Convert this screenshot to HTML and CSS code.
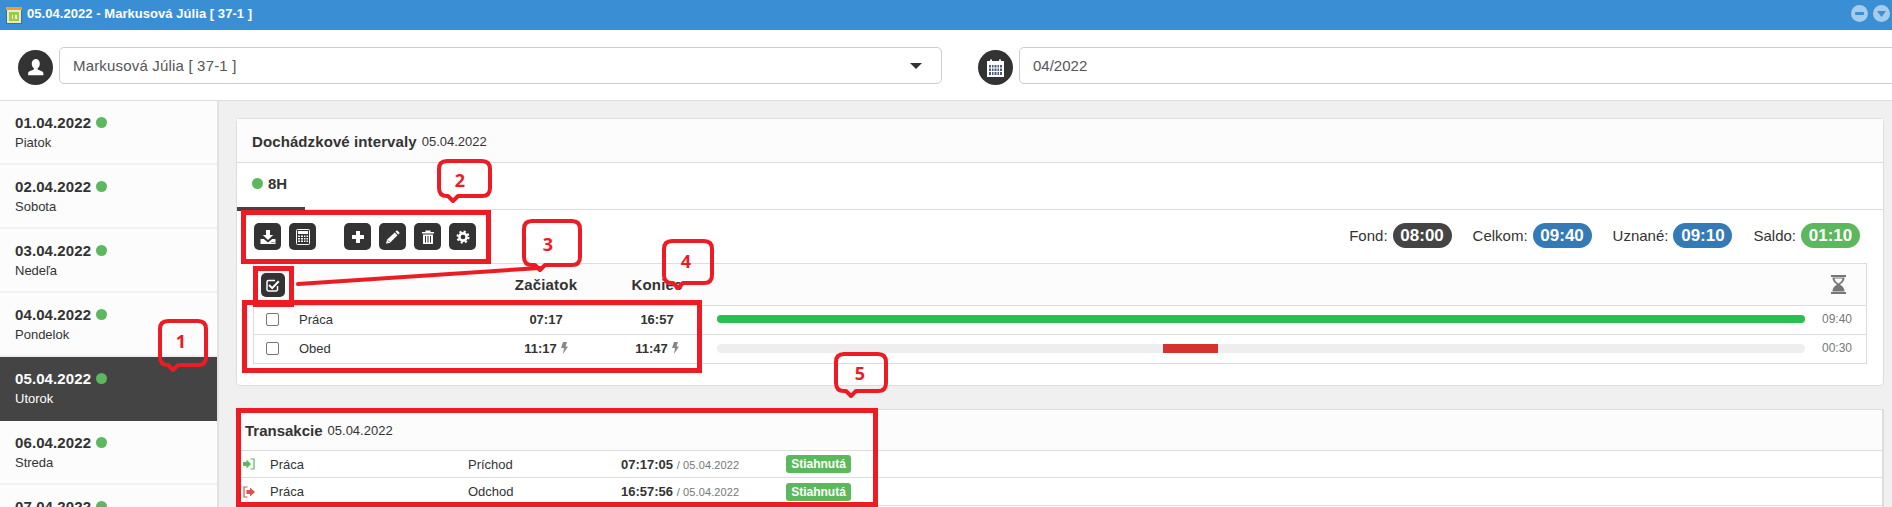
FILE: index.html
```html
<!DOCTYPE html>
<html lang="sk">
<head>
<meta charset="utf-8">
<title>Dochádzka</title>
<link rel="stylesheet" href="styles.css">
</head>
<body>
<div class="app">
  <header class="titlebar">
    <svg class="title-icon" viewBox="0 0 16 17"><rect x="0" y="0" width="16" height="17" fill="#3f6f94"/><rect x="0" y="0" width="16" height="3" fill="#f09a3a"/><rect x="1" y="3" width="14" height="13" fill="#e8ecc4"/><rect x="3" y="5" width="10" height="9" fill="#9ccb4a"/><rect x="6" y="8" width="1" height="4" fill="#f4f4d0"/><rect x="9" y="8" width="2" height="4" fill="#f4f4d0"/></svg>
    <span class="title-text">05.04.2022 - Markusová Júlia [ 37-1 ]</span>
    <span class="win-btns">
      <span class="win-btn"><svg viewBox="0 0 17 17"><rect x="4" y="7" width="9" height="3" rx="1" fill="#3b8fd4"/></svg></span>
      <span class="win-btn"><svg viewBox="0 0 17 17"><path d="M4 6h9l-4.500 6z" fill="#3b8fd4"/></svg></span>
    </span>
  </header>

  <section class="filters">
    <span class="round-icon"><svg viewBox="-2 -1 39 39"><path d="M17.500 9c3 0 4.800 2.300 4.800 5.200 0 2.200-1 4.200-2.400 5.100v1.300l4.800 2c1.100.5 1.600 1.300 1.600 2.400V27H9.300v-1.900c0-1.100.5-1.900 1.600-2.400l4.800-2v-1.300c-1.400-.9-2.400-2.900-2.400-5.100 0-2.900 1.700-5.300 4.200-5.300z" fill="#fff"/></svg></span>
    <div class="select"><span>Markusová Júlia [ 37-1 ]</span><i class="caret"></i></div>
    <span class="round-icon round-cal"><svg viewBox="0 0 35 35"><path d="M9 11h3V9.500h2V11h7V9.500h2V11h3v16H9z" fill="#fff"/><path d="M11 15h13v10H11z" fill="#4a5a78"/><path d="M13.500 15v10M16 15v10M19 15v10M21.500 15v10M11 18h13M11 21.500h13" stroke="#fff" stroke-width="1"/></svg></span>
    <div class="month-input">04/2022</div>
  </section>

  <div class="workspace">
    <aside class="days">
      <a class="day"><span class="day-date">01.04.2022<i class="dot"></i></span><span class="day-name">Piatok</span></a>
      <a class="day"><span class="day-date">02.04.2022<i class="dot"></i></span><span class="day-name">Sobota</span></a>
      <a class="day"><span class="day-date">03.04.2022<i class="dot"></i></span><span class="day-name">Nedeľa</span></a>
      <a class="day"><span class="day-date">04.04.2022<i class="dot"></i></span><span class="day-name">Pondelok</span></a>
      <a class="day day-active"><span class="day-date">05.04.2022<i class="dot"></i></span><span class="day-name">Utorok</span></a>
      <a class="day"><span class="day-date">06.04.2022<i class="dot"></i></span><span class="day-name">Streda</span></a>
      <a class="day"><span class="day-date">07.04.2022<i class="dot"></i></span></a>
    </aside>

    <main class="content">
      <section class="panel">
        <h2 class="panel-head"><b>Dochádzkové intervaly</b> <small>05.04.2022</small></h2>
        <div class="tabs"><div class="tab"><i class="dot tab-dot"></i>8H</div></div>

        <div class="toolbar">
          <div class="btn-group">
            <button class="btn"><svg viewBox="0 0 16 16"><path d="M6 1h4v5h3.200L8 11 2.800 6H6zM.5 10h3.300L8 13.500 12.200 10h3.300v5H.5z" fill="#fff"/><path d="M11.500 13h1v1h-1zM13.500 13h1v1h-1z" fill="#333"/></svg></button>
            <button class="btn"><svg viewBox="0 0 16 16"><rect x="1.500" y=".5" width="13" height="15" rx="1" fill="#333" stroke="#fff"/><rect x="3" y="2" width="10" height="3" fill="#fff"/><path d="M3 6.500h2v1.500H3zM6 6.500h2v1.500H6zM9 6.500h1.500v1.500H9zM11.500 6.500H13v1.500h-1.500zM3 9h2v1.500H3zM6 9h2v1.500H6zM9 9h1.500v1.500H9zM11.500 9H13v1.500h-1.500zM3 11.500h2V13H3zM6 11.500h2V13H6zM9 11.500h1.500V13H9zM11.500 11.500H13V13h-1.500z" fill="#fff"/></svg></button>
          </div>
          <div class="btn-group">
            <button class="btn"><svg viewBox="0 0 16 16"><path d="M6 2h4v4h4v4h-4v4H6v-4H2V6h4z" fill="#fff"/></svg></button>
            <button class="btn"><svg viewBox="0 0 16 16"><path d="M12 1.200l2.800 2.800-1.500 1.500-2.800-2.800zM9.700 3.500l2.800 2.800-7.500 7.500-4 1 1-4z" fill="#fff"/><path d="M3 11.500l1.500 1.500" stroke="#333" stroke-width=".8"/></svg></button>
            <button class="btn"><svg viewBox="0 0 16 16"><path d="M5.500 3V1.500h5V3H14v1.500H2V3z" fill="#fff"/><path d="M3 5.500h10V15H3z" fill="#fff"/><path d="M5.500 7v6.500M8 7v6.500M10.500 7v6.500" stroke="#333" stroke-width="1"/></svg></button>
            <button class="btn"><svg viewBox="-1.500 -1.500 19 19"><circle cx="8" cy="8" r="4.300" fill="none" stroke="#fff" stroke-width="3"/><circle cx="8" cy="8" r="6.500" fill="none" stroke="#fff" stroke-width="2.500" stroke-dasharray="2.550 2.550"/></svg></button>
          </div>
          <div class="stats">
            <span class="stat">Fond:<b class="pill pill-dark">08:00</b></span>
            <span class="stat">Celkom:<b class="pill pill-blue">09:40</b></span>
            <span class="stat">Uznané:<b class="pill pill-blue">09:10</b></span>
            <span class="stat">Saldo:<b class="pill pill-green">01:10</b></span>
          </div>
        </div>

        <div class="table">
          <div class="row row-head">
            <span class="cell-check"><button class="btn btn-sm"><svg viewBox="0 0 16 16"><path d="M12.500 9v3.500a1.500 1.500 0 0 1-1.500 1.500H3.500A1.500 1.500 0 0 1 2 12.500V5a1.500 1.500 0 0 1 1.500-1.500H10" fill="none" stroke="#fff" stroke-width="1.500"/><path d="M4.800 7.300l2.400 2.400L13 3.500l1.500 1.500-7.300 7.500L3.300 8.800z" fill="#fff"/></svg></button></span>
            <span></span>
            <span class="cell-center">Začiatok</span>
            <span class="cell-center">Koniec</span>
            <span></span>
            <span class="cell-hour"><svg class="hourglass" viewBox="0 0 17 19"><path d="M1 0h15v2H1zM1 17h15v2H1zM2.500 2.500h12c0 4-2.500 5.500-4.500 7 2 1.500 4.500 3 4.500 7h-12c0-4 2.500-5.500 4.500-7-2-1.500-4.500-3-4.500-7zM4.500 3.500c.3 2.300 2 3.800 4 5 2-1.200 3.700-2.700 4-5z" fill="#777" fill-rule="evenodd"/></svg></span>
          </div>
          <div class="row row-data">
            <span class="cell-check"><i class="checkbox"></i></span>
            <span>Práca</span>
            <span class="cell-center cell-time">07:17</span>
            <span class="cell-center cell-time">16:57</span>
            <span class="cell-bar"><span class="bar bar-thin"><span class="bar-fill bar-green" style="left:0;width:100%"></span></span></span>
            <span class="cell-dur">09:40</span>
          </div>
          <div class="row row-data">
            <span class="cell-check"><i class="checkbox"></i></span>
            <span>Obed</span>
            <span class="cell-center cell-time">11:17<svg class="bolt" viewBox="0 0 7 12"><path d="M2 0h4L4.500 4.500H7L2 12l1-6H0z" fill="#888"/></svg></span>
            <span class="cell-center cell-time">11:47<svg class="bolt" viewBox="0 0 7 12"><path d="M2 0h4L4.500 4.500H7L2 12l1-6H0z" fill="#888"/></svg></span>
            <span class="cell-bar"><span class="bar"><span class="bar-fill bar-red" style="left:41%;width:5.05%"></span></span></span>
            <span class="cell-dur">00:30</span>
          </div>
        </div>
      </section>

      <section class="panel panel-trans">
        <h2 class="panel-head trans-head"><b>Transakcie</b> <small>05.04.2022</small></h2>
        <div class="trans-row">
          <svg class="trans-icon" viewBox="0 0 12 12"><path d="M0 4h3.500V1.500L8 6l-4.500 4.500V8H0z" fill="#5cb85c"/><path d="M7.500 1H11v10H7.500" fill="none" stroke="#5cb85c" stroke-width="1.200"/></svg>
          <span>Práca</span><span>Príchod</span>
          <span class="trans-time"><b>07:17:05</b> <small>/ 05.04.2022</small></span>
          <span class="tag">Stiahnutá</span>
        </div>
        <div class="trans-row">
          <svg class="trans-icon" viewBox="0 0 12 12"><path d="M4.500 1H1v10h3.500" fill="none" stroke="#d9534f" stroke-width="1.200"/><path d="M3.500 4H7V1.500L12 6l-5 4.500V8H3.500z" fill="#d9534f"/></svg>
          <span>Práca</span><span>Odchod</span>
          <span class="trans-time"><b>16:57:56</b> <small>/ 05.04.2022</small></span>
          <span class="tag">Stiahnutá</span>
        </div>
      </section>
    </main>
  </div>

  <svg class="annotations" viewBox="0 0 1892 507">
    <rect class="a-box" x="243.500" y="212.500" width="245" height="49"/>
    <rect class="a-box" x="255.500" y="268.500" width="36" height="36"/>
    <rect class="a-box" x="244.500" y="302.500" width="455" height="68"/>
    <rect class="a-box" x="238.500" y="410.500" width="637" height="94"/>
    <path class="a-line" d="M298 284L540 268"/>
    <path class="a-call" d="M168 321H198Q206 321 206 329V357Q206 365 198 365H178L173 370L168 365Q160 365 160 357V329Q160 321 168 321Z"/>
    <path class="a-call" d="M447 161H482Q490 161 490 169V188Q490 196 482 196H458L453 201L448 196H447Q439 196 439 188V169Q439 161 447 161Z"/>
    <path class="a-call" d="M532 221H572Q580 221 580 229V257Q580 265 572 265H545L540 270L535 265H532Q524 265 524 257V229Q524 221 532 221Z"/>
    <path class="a-call" d="M672 241H704Q712 241 712 249V275Q712 283 704 283H683L678 288L673 283H672Q664 283 664 275V249Q664 241 672 241Z"/>
    <path class="a-call" d="M844 354H878Q886 354 886 362V383Q886 391 878 391H856L851 396L846 391H844Q836 391 836 383V362Q836 354 844 354Z"/>
    <text class="a-num" x="181" y="348">1</text>
    <text class="a-num" x="460" y="187">2</text>
    <text class="a-num" x="548" y="251">3</text>
    <text class="a-num" x="686" y="268">4</text>
    <text class="a-num" x="860" y="380">5</text>
  </svg>
</div>
</body>
</html>
```
FILE: styles.css
```css
* { box-sizing: border-box; }
html, body { margin: 0; height: 100%; overflow: hidden; }
body { font-family: "Liberation Sans", Arial, sans-serif; font-size: 13px; color: #333; background: #fff; }

.app { position: relative; display: flex; flex-direction: column; height: 507px; overflow: hidden; }

/* title bar */
.titlebar { flex: none; display: flex; align-items: center; height: 30px; padding: 0 2px 3px 6px; background: #3a8fd4; color: #fff; }
.title-icon { width: 16px; height: 17px; margin-top: 3px; flex: none; }
.title-text { margin-left: 5px; font-size: 13px; font-weight: 700; letter-spacing: .05px; }
.win-btns { display: flex; gap: 5px; margin-left: auto; }
.win-btn { width: 17px; height: 17px; border-radius: 50%; background: #a6cced; }
.win-btn svg { display: block; width: 17px; height: 17px; }

/* filter row */
.filters { flex: none; display: flex; align-items: flex-start; height: 71px; padding: 17px 0 0 18px; border-bottom: 1px solid #ddd; overflow: hidden; }
.round-icon { flex: none; width: 35px; height: 35px; margin-top: 3px; border-radius: 50%; background: #333; }
.round-icon svg { display: block; width: 35px; height: 35px; }
.round-cal { margin-left: 36px; }
.select, .month-input { display: flex; align-items: center; height: 37px; border: 1px solid #ccc; border-radius: 5px; background: #fff; font-size: 15px; color: #555; }
.select { width: 883px; margin-left: 6px; padding: 0 19px 0 13px; justify-content: space-between; letter-spacing: .18px; }
.caret { width: 0; height: 0; border-style: solid; border-width: 6px 6px 0; border-color: #333 transparent transparent; }
.month-input { flex: 1; margin: 0 -6px 0 6px; padding-left: 13px; }

/* main layout */
.workspace { flex: 1; display: flex; min-height: 0; }
.days { flex: none; width: 219px; background: #fcfcfc; border-right: 2px solid #e2e2e2; overflow: hidden; }
.day { display: flex; flex-direction: column; height: 64px; padding: 13px 0 0 15px; border-bottom: 2px solid #f0f0f0; }
.day-date { display: flex; align-items: center; font-size: 15px; font-weight: 700; line-height: 17px; letter-spacing: .1px; }
.day-name { margin-top: 3px; font-size: 13px; line-height: 17px; }
.dot { display: inline-block; flex: none; width: 11px; height: 11px; margin-left: 5px; border-radius: 50%; background: #5cb85c; }
.day-active { background: #444; color: #fff; border-bottom-color: #444; }

.content { flex: 1; min-width: 0; padding: 17px 8px 0 17px; background: #f0f0f0; }
.panel { border: 1px solid #ddd; border-radius: 4px; background: #fff; height: 268px; }
.panel-trans { height: 120px; margin-top: 23px; border-radius: 0; border-right-width: 2px; }
.panel-head { display: flex; align-items: center; gap: 5px; height: 44px; margin: 0; padding: 2px 0 0 15px; border-bottom: 1px solid #ddd; background: #fcfcfc; font-size: 15px; font-weight: 400; }
.panel-head b { letter-spacing: .1px; }
.panel-head small { font-size: 13px; }
.trans-head { height: 41px; padding: 0 0 0 8px; }
.trans-head b { letter-spacing: 0; }

.tabs { height: 47px; border-bottom: 1px solid #ddd; }
.tab { display: flex; align-items: center; width: 68px; height: 48px; padding: 0 0 3px 10px; border-bottom: 4px solid #444; font-size: 15px; font-weight: 700; }
.tab-dot { margin: 0 5px 0 5px; }

.toolbar { display: flex; align-items: center; height: 53px; padding: 0 23px 0 17px; }
.btn-group { display: flex; gap: 8px; }
.btn-group + .btn-group { margin-left: 28px; }
.btn { display: flex; align-items: center; justify-content: center; width: 27px; height: 27px; padding: 0; border: 0; border-radius: 5px; background: #333; }
.btn svg { display: block; width: 16px; height: 16px; }
.btn-sm { width: 24px; height: 24px; }
.stats { display: flex; gap: 21px; margin: 0 0 2px auto; }
.stat { display: flex; align-items: center; gap: 5px; font-size: 15px; }
.pill { width: 59px; height: 25px; border-radius: 13px; color: #fff; font-size: 17px; line-height: 25px; text-align: center; }
.pill-dark { background: #444; }
.pill-blue { background: #337ab7; }
.pill-green { background: #5cb85c; }

.table { margin: 0 16px; border: 1px solid #ddd; }
.row { display: grid; grid-template-columns: 46px 190px 112px 110px 1fr 61px; align-items: center; height: 29px; border-top: 1px solid #ddd; }
.row-head { height: 41px; border-top: 0; background: #fcfcfc; font-size: 15px; font-weight: 700; letter-spacing: .2px; }
.row-data { padding-bottom: 2px; }
.row-data > span:nth-child(2) { margin-left: -1px; }
.cell-check { display: flex; justify-content: flex-start; padding-left: 12px; }
.row-head .cell-check { padding-left: 7px; }
.cell-center { display: flex; align-items: center; justify-content: center; }
.cell-time { font-weight: 700; }
.cell-hour { display: flex; justify-content: flex-end; padding-right: 19px; }
.hourglass { width: 17px; height: 19px; }
.bolt { width: 7px; height: 12px; margin-left: 4px; }
.checkbox { display: block; width: 13px; height: 13px; border: 1px solid #777; border-radius: 2px; background: #fff; }
.cell-bar { display: flex; align-items: center; padding-left: 5px; }
.bar { position: relative; display: block; width: 100%; height: 9px; border-radius: 5px; background: #eee; overflow: hidden; }
.bar-thin { height: 8px; }
.bar-fill { position: absolute; top: 0; bottom: 0; }
.bar-green { background: #28c04f; }
.bar-red { background: #d3322e; }
.cell-dur { padding-right: 14px; text-align: right; font-size: 12px; color: #777; }

.trans-row { display: grid; grid-template-columns: 33px 198px 153px 165px 65px; align-items: center; height: 27px; border-bottom: 1px solid #ddd; }
.trans-row + .trans-row { height: 28px; }
.trans-icon { width: 12px; height: 12px; margin-left: 6px; }
.trans-time small { font-size: 11px; letter-spacing: .12px; color: #777; }
.tag { height: 18px; border-radius: 3px; background: #5cb85c; color: #fff; font-size: 12px; font-weight: 700; line-height: 18px; text-align: center; }

/* hand-drawn red review marks lying over the screenshot */
.annotations { position: absolute; top: 0; left: 0; width: 1892px; height: 507px; pointer-events: none; }
.a-box { fill: none; stroke: #ed1c24; stroke-width: 5; }
.a-line { fill: none; stroke: #ed1c24; stroke-width: 4; stroke-linecap: round; }
.a-call { fill: none; stroke: #ed1c24; stroke-width: 4; stroke-linejoin: round; }
.a-num { fill: #ed1c24; font-family: "Open Sans", sans-serif; font-size: 18px; font-weight: 700; text-anchor: middle; }
```
